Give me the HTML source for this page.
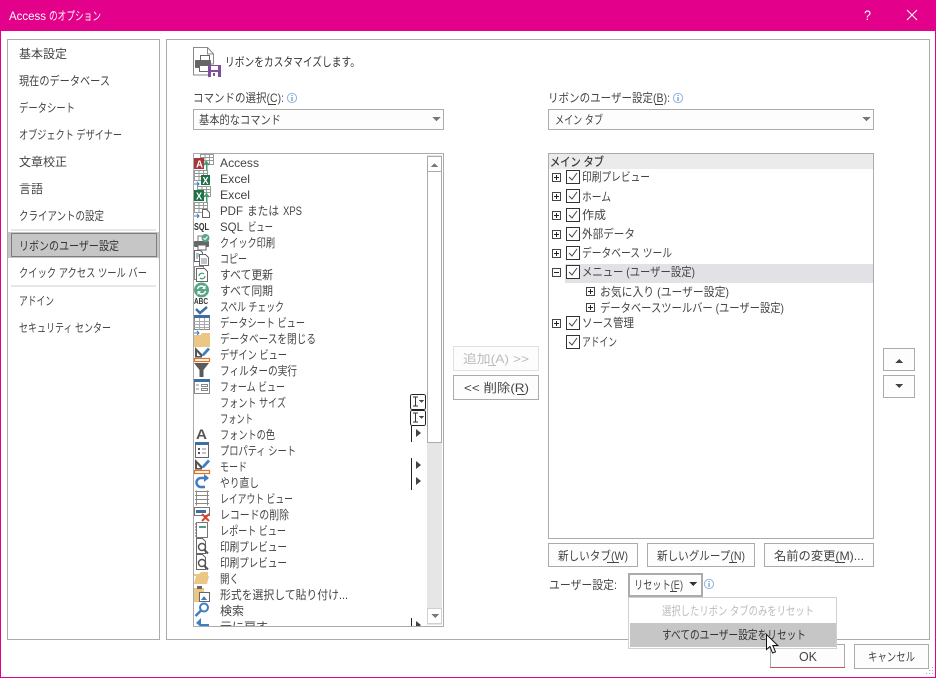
<!DOCTYPE html>
<html lang="ja"><head><meta charset="utf-8"><title>Access のオプション</title>
<style>
html,body{margin:0;padding:0;background:#fff;width:936px;height:678px;overflow:hidden}
svg{display:block}
text{font-family:"Liberation Sans","Noto Sans CJK JP",sans-serif;font-size:12px;fill:#444}
.w{fill:#fff}
.box{fill:#fdfdfd;stroke:#ababab}
</style></head><body>
<svg width="936" height="678" viewBox="0 0 936 678" xmlns="http://www.w3.org/2000/svg" shape-rendering="crispEdges">
<defs>
<clipPath id="lc"><rect x="194" y="154" width="233" height="472"/></clipPath>
<g id="cb"><rect x=".5" y=".5" width="13" height="13" fill="#fff" stroke="#333"/><path d="M3 7l3 3 5-7" fill="none" stroke="#444" shape-rendering="auto"/></g>
<g id="pl"><rect x=".5" y=".5" width="8" height="8" fill="#fff" stroke="#444"/><path d="M2 4.500h5M4.500 2v5" stroke="#222"/></g>
<g id="inf" shape-rendering="auto"><circle cx="5" cy="5" r="4.600" fill="#fff" stroke="#8db4e0"/><rect x="4.500" y="2" width="1" height="1" fill="#4a78b0"/><rect x="4.500" y="4" width="1" height="4" fill="#4a78b0"/></g>
<g id="prv"><path d="M2.500 .5h6l3 3v12h-9z" fill="#fff" stroke="#666"/><circle cx="8" cy="9" r="3.500" fill="#fff" stroke="#555" stroke-width="1.500" shape-rendering="auto"/><path d="M10 11.500l4 4" stroke="#555" stroke-width="2" shape-rendering="auto"/></g>
<g id="fx"><path d="M.5 0v16" stroke="#222"/><path d="M5 3l5 4-5 4z" fill="#444" shape-rendering="auto"/></g>
<g id="fs"><rect x=".5" y=".5" width="15" height="15" rx="2" fill="#fff" stroke="#222"/><path d="M3 3h5M3 12h5M5.500 3v9" stroke="#333"/><path d="M9 6h5l-2.500 3z" fill="#444"/></g>
<g id="grid"><rect x=".5" y=".5" width="13" height="10" fill="#fff" stroke="#999"/><path d="M.5 3.500h13M.5 6.500h13M5 .5v10M9.500 .5v10" stroke="#999"/></g>
<g id="des" shape-rendering="auto"><path d="M1 1l7 7v3.500H1zM3 6v4h3.500z" fill="#555" fill-rule="evenodd"/><path d="M7.500 10.500l1-3 5.500-6 2 2-5.500 6z" fill="#3f7fc1"/><path d="M.5 12.500h15v3H.5z" fill="#fff" stroke="#e07320" stroke-width="1.200"/></g>
</defs>

<!-- frame -->
<rect width="936" height="678" fill="#e3008b"/>
<rect x="1" y="31" width="934" height="646" fill="#fff"/>
<text class="w" x="9" y="20" textLength="37" lengthAdjust="spacingAndGlyphs">Access</text>
<text class="w" x="49" y="20" textLength="52" lengthAdjust="spacingAndGlyphs">のオプション</text>
<text class="w" x="864" y="20" textLength="7" lengthAdjust="spacingAndGlyphs" style="font-size:14px">?</text>
<path d="M907 10l10 10M917 10l-10 10" stroke="#fff" stroke-width="1.100" shape-rendering="auto"/>

<!-- left nav -->
<rect x="7.500" y="39.500" width="152" height="600" fill="#fff" stroke="#ababab"/>
<text x="19" y="58" textLength="48" lengthAdjust="spacingAndGlyphs">基本設定</text>
<text x="19" y="85" textLength="91" lengthAdjust="spacingAndGlyphs">現在のデータベース</text>
<text x="19" y="112" textLength="56" lengthAdjust="spacingAndGlyphs">データシート</text>
<text x="19" y="139" textLength="103" lengthAdjust="spacingAndGlyphs">オブジェクト デザイナー</text>
<text x="19" y="166" textLength="48" lengthAdjust="spacingAndGlyphs">文章校正</text>
<text x="19" y="193" textLength="24" lengthAdjust="spacingAndGlyphs">言語</text>
<text x="19" y="220" textLength="85" lengthAdjust="spacingAndGlyphs">クライアントの設定</text>
<rect x="11" y="229" width="145" height="2" fill="#e6e6e6"/>
<rect x="8" y="232" width="151" height="26" fill="#c6c6c6"/>
<rect x="11.500" y="233.500" width="145" height="23" fill="none" stroke="#333" stroke-dasharray="1 1"/>
<text x="19" y="250" textLength="100" lengthAdjust="spacingAndGlyphs" style="fill:#333">リボンのユーザー設定</text>
<text x="19" y="277" textLength="128" lengthAdjust="spacingAndGlyphs">クイック アクセス ツール バー</text>
<rect x="11" y="285" width="145" height="2" fill="#e6e6e6"/>
<text x="19" y="305" textLength="35" lengthAdjust="spacingAndGlyphs">アドイン</text>
<text x="19" y="332" textLength="92" lengthAdjust="spacingAndGlyphs">セキュリティ センター</text>

<!-- main panel -->
<rect x="166.500" y="39.500" width="763" height="600" fill="#fff" stroke="#ababab"/>

<!-- header icon -->
<g shape-rendering="auto">
<path d="M193.500 47.500h14l6 6.500v10h-5v11h-15z" fill="#fff" stroke="#8a8a8a"/>
<path d="M207.500 47.500v6.500h6" fill="none" stroke="#8a8a8a"/>
<rect x="200.500" y="55.500" width="9" height="6" fill="#fff" stroke="#666"/>
<rect x="195" y="60" width="16" height="8" rx="1" fill="#666"/>
<rect x="199.500" y="65.500" width="9" height="6" fill="#fff" stroke="#666"/>
<rect x="208" y="65" width="13" height="12" fill="#7d4f9e"/>
<rect x="211" y="66" width="7" height="4" fill="#fff"/>
<rect x="211" y="72" width="7" height="5" fill="#fff"/>
<rect x="213" y="73" width="2" height="3" fill="#7d4f9e"/>
</g>
<text x="225" y="66" textLength="135" lengthAdjust="spacingAndGlyphs" style="fill:#333">リボンをカスタマイズします。</text>

<!-- left selector -->
<text x="193" y="102" textLength="91" lengthAdjust="spacingAndGlyphs">コマンドの選択(C):</text>
<rect x="268" y="104" width="8" height="1" fill="#444"/>
<use href="#inf" x="287" y="93"/>
<rect x="193.500" y="109.500" width="250" height="20" class="box"/>
<text x="199" y="124" textLength="82" lengthAdjust="spacingAndGlyphs">基本的なコマンド</text>
<path d="M432 117h9l-4.500 4z" fill="#777"/>

<!-- left list -->
<rect x="193.500" y="153.500" width="250" height="473" fill="#fff" stroke="#ababab"/>
<g clip-path="url(#lc)">
<text x="220" y="167" textLength="39" lengthAdjust="spacingAndGlyphs">Access</text>
<text x="220" y="183" textLength="30" lengthAdjust="spacingAndGlyphs">Excel</text>
<text x="220" y="199" textLength="30" lengthAdjust="spacingAndGlyphs">Excel</text>
<text x="220" y="215" textLength="23" lengthAdjust="spacingAndGlyphs">PDF</text>
<text x="247" y="215" textLength="32" lengthAdjust="spacingAndGlyphs">または</text>
<text x="283" y="215" textLength="19" lengthAdjust="spacingAndGlyphs">XPS</text>
<text x="220" y="231" textLength="23" lengthAdjust="spacingAndGlyphs">SQL</text>
<text x="248" y="231" textLength="25" lengthAdjust="spacingAndGlyphs">ビュー</text>
<text x="220" y="247" textLength="55" lengthAdjust="spacingAndGlyphs">クイック印刷</text>
<text x="220" y="263" textLength="27" lengthAdjust="spacingAndGlyphs">コピー</text>
<text x="220" y="279" textLength="53" lengthAdjust="spacingAndGlyphs">すべて更新</text>
<text x="220" y="295" textLength="53" lengthAdjust="spacingAndGlyphs">すべて同期</text>
<text x="220" y="311" textLength="64" lengthAdjust="spacingAndGlyphs">スペル チェック</text>
<text x="220" y="327" textLength="85" lengthAdjust="spacingAndGlyphs">データシート ビュー</text>
<text x="220" y="343" textLength="96" lengthAdjust="spacingAndGlyphs">データベースを閉じる</text>
<text x="220" y="359" textLength="67" lengthAdjust="spacingAndGlyphs">デザイン ビュー</text>
<text x="220" y="375" textLength="77" lengthAdjust="spacingAndGlyphs">フィルターの実行</text>
<text x="220" y="391" textLength="65" lengthAdjust="spacingAndGlyphs">フォーム ビュー</text>
<text x="220" y="407" textLength="66" lengthAdjust="spacingAndGlyphs">フォント サイズ</text>
<text x="220" y="423" textLength="33" lengthAdjust="spacingAndGlyphs">フォント</text>
<text x="220" y="439" textLength="55" lengthAdjust="spacingAndGlyphs">フォントの色</text>
<text x="220" y="455" textLength="76" lengthAdjust="spacingAndGlyphs">プロパティ シート</text>
<text x="220" y="471" textLength="27" lengthAdjust="spacingAndGlyphs">モード</text>
<text x="220" y="487" textLength="39" lengthAdjust="spacingAndGlyphs">やり直し</text>
<text x="220" y="503" textLength="73" lengthAdjust="spacingAndGlyphs">レイアウト ビュー</text>
<text x="220" y="519" textLength="69" lengthAdjust="spacingAndGlyphs">レコードの削除</text>
<text x="220" y="535" textLength="66" lengthAdjust="spacingAndGlyphs">レポート ビュー</text>
<text x="220" y="551" textLength="67" lengthAdjust="spacingAndGlyphs">印刷プレビュー</text>
<text x="220" y="567" textLength="67" lengthAdjust="spacingAndGlyphs">印刷プレビュー</text>
<text x="220" y="583" textLength="19" lengthAdjust="spacingAndGlyphs">開く</text>
<text x="220" y="599" textLength="128" lengthAdjust="spacingAndGlyphs">形式を選択して貼り付け...</text>
<text x="220" y="615" textLength="24" lengthAdjust="spacingAndGlyphs">検索</text>
<text x="220" y="631" textLength="48" lengthAdjust="spacingAndGlyphs">元に戻す</text>

<!-- icons -->
<g transform="translate(194,154)"><use href="#grid" x="6"/><rect x="0" y="4" width="10" height="11" fill="#a4373a"/><text class="w" x="2" y="13.500" textLength="7" lengthAdjust="spacingAndGlyphs" style="font-size:10px;font-weight:bold">A</text><path d="M12.500 16V9M10 11l2.500-3 2.500 3" fill="none" stroke="#3f9a6e" stroke-width="1.500"/></g>
<g transform="translate(194,170)"><use href="#grid"/><rect x="7" y="5" width="9" height="10" fill="#1e7145"/><text class="w" x="8.500" y="14" textLength="6" lengthAdjust="spacingAndGlyphs" style="font-size:10px;font-weight:bold">X</text><path d="M0 14h4M3 12l2 2-2 2" fill="none" stroke="#3f7fc1"/></g>
<g transform="translate(194,186)"><use href="#grid" x="3"/><rect x="0" y="4" width="10" height="11" fill="#1e7145"/><text class="w" x="2" y="13.500" textLength="6" lengthAdjust="spacingAndGlyphs" style="font-size:10px;font-weight:bold">X</text><path d="M12.500 16V9M10 11l2.500-3 2.500 3" fill="none" stroke="#3f9a6e" stroke-width="1.500"/></g>
<g transform="translate(194,202)"><use href="#grid"/><path d="M0 14h4M3 12l2 2-2 2" fill="none" stroke="#3f7fc1"/><path d="M8.500 7.500h4l3 3v5h-7z" fill="#fff" stroke="#666"/></g>
<text x="194" y="230" textLength="15" lengthAdjust="spacingAndGlyphs" style="font-size:10px;font-weight:bold;fill:#333">SQL</text>
<g transform="translate(194,234)" shape-rendering="auto"><rect x="4" y="2" width="7" height="6" fill="#fff" stroke="#777"/><rect x="0" y="7" width="15" height="6" rx="1" fill="#666"/><rect x="4" y="11" width="8" height="5" fill="#fff" stroke="#666"/><circle cx="11.500" cy="4" r="4" fill="#5aa587"/><path d="M9.500 4l1.500 1.500 2.500-3" fill="none" stroke="#fff"/></g>
<g transform="translate(194,250)"><path d="M.5 .5h6l2 2v9h-8z" fill="#fff" stroke="#666"/><path d="M5.500 4.500h6l3 3v8h-9z" fill="#fff" stroke="#666"/><path d="M2 4h3M2 6h3M2 8h2" stroke="#4a78b0"/><path d="M7 9h6M7 11h6M7 13h6" stroke="#888"/></g>
<g transform="translate(194,266)"><path d="M.5 .5h9v13h-9z" fill="#fff" stroke="#888"/><path d="M2.500 2.500h8l3 3v10h-11z" fill="#fff" stroke="#666"/><path d="M5 10a3 3 0 0 1 5-2M11 10a3 3 0 0 1-5 2" fill="none" stroke="#3f9a6e" stroke-width="1.200" shape-rendering="auto"/></g>
<g transform="translate(194,282)" shape-rendering="auto"><circle cx="7.500" cy="8" r="7.500" fill="#5aa587"/><path d="M3.500 7a4 4 0 0 1 7-1.500M11.500 9a4 4 0 0 1-7 1.500" fill="none" stroke="#fff" stroke-width="1.500"/><path d="M11.500 3v4h-3.500zM3.500 13v-4h3.500z" fill="#fff"/></g>
<text x="194" y="304" textLength="14" lengthAdjust="spacingAndGlyphs" style="font-size:8px;font-weight:bold;fill:#333">ABC</text>
<path d="M196 309l4 4 7-6" fill="none" stroke="#3b6fa8" stroke-width="2.500" shape-rendering="auto"/>
<g transform="translate(194,315)"><rect x=".5" y=".5" width="15" height="14" fill="#fff" stroke="#888"/><rect x="0" y="0" width="16" height="3" fill="#3f6da5"/><path d="M0 6.500h16M0 9.500h16M0 12.500h16M5.500 3v12M10.500 3v12" stroke="#aaa"/></g>
<g transform="translate(194,331)"><path d="M0 4h6l2-2h8v14H0z" fill="#ecc684"/><path d="M0 2h4M3 0l2 2-2 2" fill="none" stroke="#3f7fc1"/></g>
<use href="#des" x="194" y="346"/>
<path d="M194 363h15l-5.500 7v7h-4v-7z" fill="#5a5a5a" shape-rendering="auto"/>
<g transform="translate(194,379)"><rect x=".5" y=".5" width="15" height="14" fill="#fff" stroke="#888"/><rect x="0" y="0" width="16" height="3" fill="#3f6da5"/><path d="M2 6h3M2 10h3" stroke="#888"/><rect x="7.500" y="5.500" width="6" height="2" fill="#fff" stroke="#888"/><rect x="7.500" y="9.500" width="6" height="2" fill="#fff" stroke="#888"/></g>
<use href="#fs" x="410" y="394"/>
<use href="#fs" x="410" y="410"/>
<text x="196" y="439" textLength="11" lengthAdjust="spacingAndGlyphs" style="font-size:14px;font-weight:bold;fill:#555">A</text>
<use href="#fx" x="411" y="426"/>
<g transform="translate(195,442)"><rect x=".5" y=".5" width="13" height="15" fill="#fff" stroke="#666"/><rect x="0" y="0" width="14" height="3" fill="#3f6da5"/><rect x="3" y="6" width="2" height="2" fill="#555"/><rect x="3" y="10" width="2" height="2" fill="#555"/><path d="M7 7h4M7 11h4" stroke="#888"/></g>
<use href="#des" x="194" y="458"/>
<use href="#fx" x="411" y="458"/>
<path d="M208 478h-7a4 4 0 0 0 0 9h4" fill="none" stroke="#3f7fc1" stroke-width="2.500" shape-rendering="auto"/>
<path d="M204 474l5 4-5 4z" fill="#3f7fc1" shape-rendering="auto"/>
<use href="#fx" x="411" y="474"/>
<g transform="translate(195,490)"><path d="M1.500 .5v15M12.500 .5v15" stroke="#888"/><path d="M0 1.500h14M0 5.500h14M0 9.500h14M0 13.500h14" stroke="#888"/></g>
<g transform="translate(194,507)"><rect x=".5" y=".5" width="15" height="8" fill="#fff" stroke="#777"/><rect x="2" y="3" width="10" height="3" fill="#3f6da5"/><path d="M8 7l7 7M15 7l-7 7" stroke="#d9482b" stroke-width="2" shape-rendering="auto"/></g>
<g transform="translate(195,522)"><rect x="1.500" y=".5" width="11" height="15" fill="#fff" stroke="#777"/><rect x="4" y="4" width="7" height="2" fill="#5a9a8a"/><path d="M0 2h1M0 5h1M0 8h1M0 11h1M0 14h1" stroke="#555"/></g>
<use href="#prv" x="194" y="538"/>
<use href="#prv" x="194" y="554"/>
<path d="M194 574h5l2-2h7v4h-14zM194 584l2-8h13l-2 8z" fill="#ecc684" shape-rendering="auto"/>
<g transform="translate(194,586)"><rect x="0" y="2" width="10" height="14" fill="#ecc684"/><rect x="3" y="0" width="5" height="3" fill="#666"/><rect x="5.500" y="6.500" width="10" height="9" fill="#fff" stroke="#666"/><path d="M7 14l3-4 3 4z" fill="#3f7fc1"/></g>
<g transform="translate(194,602)" shape-rendering="auto"><circle cx="10" cy="5.500" r="4" fill="#fff" stroke="#3f7fc1" stroke-width="2"/><path d="M7 8.500l-5.500 5.500" stroke="#3f7fc1" stroke-width="2.500"/></g>
<path d="M209 625h-8" stroke="#3f7fc1" stroke-width="2.500"/><path d="M201 618l-5 5 5 4z" fill="#3f7fc1" shape-rendering="auto"/>
<use href="#fx" x="411" y="618"/>
</g>

<!-- scrollbar -->
<rect x="427" y="155" width="15" height="470" fill="#e6e6e6"/>
<rect x="427.500" y="156.500" width="14" height="15" fill="#fff" stroke="#ababab"/>
<rect x="427.500" y="171.500" width="14" height="271" fill="#fff" stroke="#ababab"/>
<path d="M431 167h7l-3.500-4z" fill="#777"/>
<rect x="427.500" y="608.500" width="14" height="15" fill="#fff" stroke="#d0d0d0"/>
<path d="M431 614h8l-4 4z" fill="#777"/>

<!-- middle buttons -->
<rect x="453.500" y="346.500" width="85" height="24" fill="#fdfdfd" stroke="#e1e1e1"/>
<text x="463" y="363" textLength="66" lengthAdjust="spacingAndGlyphs" style="fill:#bcbcbc">追加(A) &gt;&gt;</text>
<rect x="488" y="365" width="8" height="1" fill="#bcbcbc"/>
<rect x="453.500" y="375.500" width="85" height="24" class="box"/>
<text x="464" y="392" textLength="65" lengthAdjust="spacingAndGlyphs">&lt;&lt; 削除(R)</text>
<rect x="517" y="394" width="8" height="1" fill="#444"/>

<!-- right selector -->
<text x="548" y="102" textLength="122" lengthAdjust="spacingAndGlyphs">リボンのユーザー設定(B):</text>
<rect x="655" y="104" width="8" height="1" fill="#444"/>
<use href="#inf" x="673" y="93"/>
<rect x="548.500" y="109.500" width="325" height="20" class="box"/>
<text x="555" y="124" textLength="48" lengthAdjust="spacingAndGlyphs">メイン タブ</text>
<path d="M862 117h9l-4.500 4z" fill="#777"/>

<!-- right tree -->
<rect x="548.500" y="153.500" width="325" height="385" fill="#fff" stroke="#ababab"/>
<rect x="549" y="154" width="324" height="15" fill="#ebebeb"/>
<text x="550" y="166" textLength="54" lengthAdjust="spacingAndGlyphs" style="fill:#333;stroke:#333;stroke-width:.2">メイン タブ</text>
<rect x="565" y="264" width="308" height="19" fill="#e1e1e6"/>
<use href="#pl" x="552" y="173"/><use href="#cb" x="566" y="170"/><text x="582" y="181" textLength="68" lengthAdjust="spacingAndGlyphs">印刷プレビュー</text>
<use href="#pl" x="552" y="192"/><use href="#cb" x="566" y="189"/><text x="582" y="201" textLength="29" lengthAdjust="spacingAndGlyphs">ホーム</text>
<use href="#pl" x="552" y="211"/><use href="#cb" x="566" y="208"/><text x="582" y="219" textLength="24" lengthAdjust="spacingAndGlyphs">作成</text>
<use href="#pl" x="552" y="230"/><use href="#cb" x="566" y="227"/><text x="582" y="238" textLength="53" lengthAdjust="spacingAndGlyphs">外部データ</text>
<use href="#pl" x="552" y="249"/><use href="#cb" x="566" y="246"/><text x="582" y="257" textLength="90" lengthAdjust="spacingAndGlyphs">データベース ツール</text>
<rect x="552.500" y="268.500" width="8" height="8" fill="#fff" stroke="#444"/><path d="M554 272.500h5" stroke="#222"/>
<use href="#cb" x="566" y="265"/><text x="582" y="276" textLength="113" lengthAdjust="spacingAndGlyphs">メニュー (ユーザー設定)</text>
<use href="#pl" x="586" y="287"/><text x="600" y="296" textLength="129" lengthAdjust="spacingAndGlyphs">お気に入り (ユーザー設定)</text>
<use href="#pl" x="586" y="303"/><text x="600" y="312" textLength="184" lengthAdjust="spacingAndGlyphs">データベースツールバー (ユーザー設定)</text>
<use href="#pl" x="552" y="319"/><use href="#cb" x="566" y="316"/><text x="582" y="327" textLength="52" lengthAdjust="spacingAndGlyphs">ソース管理</text>
<use href="#cb" x="566" y="335"/><text x="582" y="346" textLength="35" lengthAdjust="spacingAndGlyphs">アドイン</text>

<!-- up/down -->
<rect x="883.500" y="348.500" width="31" height="22" class="box"/>
<path d="M895 363h8l-4-4z" fill="#444"/>
<rect x="883.500" y="375.500" width="31" height="22" class="box"/>
<path d="M895 384h8l-4 4z" fill="#444"/>

<!-- bottom row buttons -->
<rect x="548.500" y="543.500" width="89" height="23" class="box"/>
<text x="558" y="560" textLength="70" lengthAdjust="spacingAndGlyphs">新しいタブ(W)</text><rect x="607" y="562" width="12" height="1" fill="#444"/>
<rect x="647.500" y="543.500" width="107" height="23" class="box"/>
<text x="657" y="560" textLength="88" lengthAdjust="spacingAndGlyphs">新しいグループ(N)</text><rect x="729" y="562" width="8" height="1" fill="#444"/>
<rect x="764.500" y="543.500" width="109" height="23" class="box"/>
<text x="774" y="560" textLength="90" lengthAdjust="spacingAndGlyphs">名前の変更(M)...</text><rect x="835" y="562" width="10" height="1" fill="#444"/>

<text x="549" y="589" textLength="68" lengthAdjust="spacingAndGlyphs">ユーザー設定:</text>
<rect x="629" y="574" width="73" height="22" fill="#fdfdfd" stroke="#ababab" stroke-width="2"/>
<text x="634" y="589" textLength="49" lengthAdjust="spacingAndGlyphs">リセット(E)</text><rect x="670" y="591" width="7" height="1" fill="#444"/>
<path d="M689 582h8l-4 4z" fill="#333"/>
<use href="#inf" x="704" y="579"/>

<!-- bottom buttons -->
<rect x="770.500" y="644.500" width="74" height="23" fill="#fdfdfd" stroke="#ababab"/>
<rect x="770" y="667" width="75" height="1" fill="#c8505a"/>
<text x="799" y="661" textLength="18" lengthAdjust="spacingAndGlyphs" style="font-size:13px">OK</text>
<rect x="854.500" y="644.500" width="74" height="24" class="box"/>
<text x="868" y="661" textLength="47" lengthAdjust="spacingAndGlyphs">キャンセル</text>
<g fill="#aaa"><rect x="932" y="673" width="1" height="1"/><rect x="932" y="670" width="1" height="1"/><rect x="932" y="667" width="1" height="1"/><rect x="929" y="673" width="1" height="1"/><rect x="929" y="670" width="1" height="1"/><rect x="926" y="673" width="1" height="1"/></g>

<!-- popup -->
<rect x="628.500" y="597.500" width="208" height="51" fill="#fff" stroke="#d0d0d0"/>
<rect x="630" y="623" width="206" height="24" fill="#c6c6c6"/>
<text x="662" y="615" textLength="152" lengthAdjust="spacingAndGlyphs" style="fill:#bcbcbc">選択したリボン タブのみをリセット</text>
<text x="662" y="639" textLength="144" lengthAdjust="spacingAndGlyphs" style="fill:#333">すべてのユーザー設定をリセット</text>

<!-- cursor -->
<path d="M766.500 634.500v15l3.500-3 2.500 6.500 3-1.200-2.700-6.300h5z" fill="#fff" stroke="#111" shape-rendering="auto"/>
</svg>
</body></html>
